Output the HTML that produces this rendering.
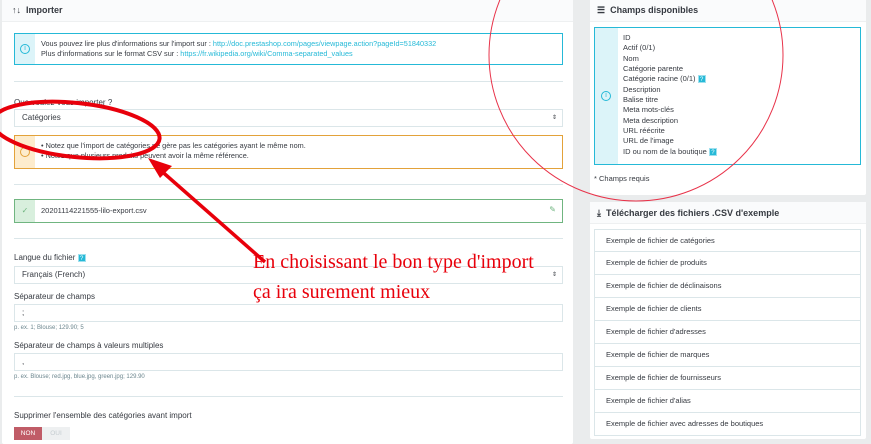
<!DOCTYPE html>
<html><head><meta charset="utf-8"><style>
*{margin:0;padding:0;box-sizing:border-box}
body{width:871px;height:444px;overflow:hidden;background:#eaeced;font-family:"Liberation Sans",sans-serif;font-size:8px;color:#363a41;position:relative}
.a{position:absolute}
.panel{background:#fff;border-radius:2px}
.hd{background:#fafbfc;border-bottom:1px solid #eef0f1;font-size:9px;font-weight:bold;color:#363a41}
.hr{position:absolute;left:14px;width:549px;height:1px;background:#dbe6e9}
.inp{position:absolute;left:14px;width:549px;border:1px solid #dbe6e9;background:#fff;height:18px;padding-left:7px;line-height:16px}
.lbl{position:absolute;left:14px}
.hint{position:absolute;left:14px;font-size:6px;color:#6c868e}
.q{display:inline-block;width:8px;height:8px;background:#25b9d7;color:#fff;font-size:6px;line-height:8px;text-align:center;border:1px solid #9fe0ee;vertical-align:middle}
.li{position:absolute;left:594px;width:267px;height:23px;border:1px solid #dbe6e9;border-top:none;padding-left:11px;line-height:22px;font-size:7.5px;background:#fff}
a{color:#25b9d7;text-decoration:none}
</style></head><body>
<div class="a panel" style="left:2px;top:0;width:571px;height:444px"></div>
<div class="a hd" style="left:2px;top:0;width:571px;height:22px;padding:5px 0 0 10px">↑↓ &nbsp;Importer</div>
<div class="a" style="left:14px;top:33px;width:549px;height:32px;border:1px solid #25b9d7;background:#fff">
<div class="a" style="left:0;top:0;width:20px;height:30px;background:#dcf4f9"></div>
<div class="a" style="left:5px;top:10px;width:10px;height:10px;border:1px solid #25b9d7;border-radius:50%;color:#25b9d7;font-size:7px;line-height:8px;text-align:center">i</div>
<div class="a" style="left:26px;top:5px;font-size:7.3px;line-height:10px">Vous pouvez lire plus d'informations sur l'import sur : <a>http://doc.prestashop.com/pages/viewpage.action?pageId=51840332</a><br>Plus d'informations sur le format CSV sur : <a>https://fr.wikipedia.org/wiki/Comma-separated_values</a></div>
</div>
<div class="hr" style="top:81px"></div>
<div class="lbl" style="top:98px">Que voulez-vous importer ?</div>
<div class="inp" style="top:109px">Catégories<span style="position:absolute;right:5px;font-size:6px">⇕</span></div>
<div class="a" style="left:14px;top:135px;width:549px;height:34px;border:1px solid #e3a23a;background:#fff">
<div class="a" style="left:0;top:0;width:20px;height:32px;background:#fdeccd"></div>
<div class="a" style="left:5px;top:11px;width:10px;height:10px;border:1px solid #e3a23a;border-radius:50%"></div>
<div class="a" style="left:26px;top:5px;font-size:7.3px;line-height:10px">• Notez que l'import de catégories ne gère pas les catégories ayant le même nom.<br>• Notez que plusieurs produits peuvent avoir la même référence.</div>
</div>
<div class="hr" style="top:184px"></div>
<div class="a" style="left:14px;top:199px;width:549px;height:24px;border:1px solid #70b580;background:#fff">
<div class="a" style="left:0;top:0;width:20px;height:22px;background:#d8efdd;color:#70b580;text-align:center;line-height:22px">✓</div>
<div class="a" style="left:26px;top:6px;font-size:7.5px">20201114221555-lilo-export.csv</div>
<div class="a" style="right:6px;top:5px;color:#70b580;font-size:8px">✎</div>
</div>
<div class="hr" style="top:238px"></div>
<div class="lbl" style="top:253px">Langue du fichier <span class="q">?</span></div>
<div class="inp" style="top:266px">Français (French)<span style="position:absolute;right:5px;font-size:6px">⇕</span></div>
<div class="lbl" style="top:292px">Séparateur de champs</div>
<div class="inp" style="top:304px">;</div>
<div class="hint" style="top:325px">p. ex. 1; Blouse; 129.90; 5</div>
<div class="lbl" style="top:341px">Séparateur de champs à valeurs multiples</div>
<div class="inp" style="top:353px">,</div>
<div class="hint" style="top:374px">p. ex. Blouse; red.jpg, blue.jpg, green.jpg; 129.90</div>
<div class="hr" style="top:396px"></div>
<div class="lbl" style="top:411px">Supprimer l'ensemble des catégories avant import</div>
<div class="a" style="left:14px;top:427px;width:28px;height:13px;background:#c05c67;color:#fff;font-size:6.5px;text-align:center;line-height:13px">NON</div>
<div class="a" style="left:42px;top:427px;width:28px;height:13px;background:#eef0f1;color:#c5ccd0;font-size:6.5px;text-align:center;line-height:13px">OUI</div>

<div class="a panel" style="left:590px;top:0;width:276px;height:195px"></div>
<div class="a hd" style="left:590px;top:0;width:276px;height:22px;padding:5px 0 0 7px">☰ &nbsp;Champs disponibles</div>
<div class="a" style="left:594px;top:27px;width:267px;height:138px;border:1px solid #25b9d7;background:#fff">
<div class="a" style="left:0;top:0;width:23px;height:136px;background:#dcf4f9"></div>
<div class="a" style="left:6px;top:63px;width:10px;height:10px;border:1px solid #25b9d7;border-radius:50%;color:#25b9d7;font-size:7px;line-height:8px;text-align:center">i</div>
<div class="a" style="left:28px;top:5px;font-size:7.5px;line-height:10.35px">ID<br>Actif (0/1)<br>Nom<br>Catégorie parente<br>Catégorie racine (0/1) <span class="q">?</span><br>Description<br>Balise titre<br>Meta mots-clés<br>Meta description<br>URL réécrite<br>URL de l'image<br>ID ou nom de la boutique <span class="q">?</span></div>
</div>
<div class="a" style="left:594px;top:174px;font-size:7.5px">* Champs requis</div>

<div class="a panel" style="left:590px;top:202px;width:276px;height:237px"></div>
<div class="a hd" style="left:590px;top:202px;width:276px;height:22px;padding:6px 0 0 7px">⤓ &nbsp;Télécharger des fichiers .CSV d'exemple</div>
<div class="li" style="top:229px;border-top:1px solid #dbe6e9">Exemple de fichier de catégories</div>
<div class="li" style="top:252px">Exemple de fichier de produits</div>
<div class="li" style="top:275px">Exemple de fichier de déclinaisons</div>
<div class="li" style="top:298px">Exemple de fichier de clients</div>
<div class="li" style="top:321px">Exemple de fichier d'adresses</div>
<div class="li" style="top:344px">Exemple de fichier de marques</div>
<div class="li" style="top:367px">Exemple de fichier de fournisseurs</div>
<div class="li" style="top:390px">Exemple de fichier d'alias</div>
<div class="li" style="top:413px">Exemple de fichier avec adresses de boutiques</div>

<svg class="a" style="left:0;top:0" width="871" height="444">
<ellipse cx="636" cy="55" rx="147" ry="146" fill="none" stroke="#e8334a" stroke-width="1"/>
<ellipse cx="76" cy="130" rx="84" ry="27" fill="none" stroke="#e8000b" stroke-width="4" transform="rotate(6 76 130)"/>
<line x1="265" y1="262" x2="158" y2="168" stroke="#e8000b" stroke-width="3.5"/>
<polygon points="148,158 172,166 160,178" fill="#e8000b"/>
<text x="253" y="268" font-family="Liberation Serif" font-size="20" fill="#e8000b">En choisissant le bon type d'import</text>
<text x="253" y="298" font-family="Liberation Serif" font-size="20" fill="#e8000b">ça ira surement mieux</text>
</svg>
</body></html>
